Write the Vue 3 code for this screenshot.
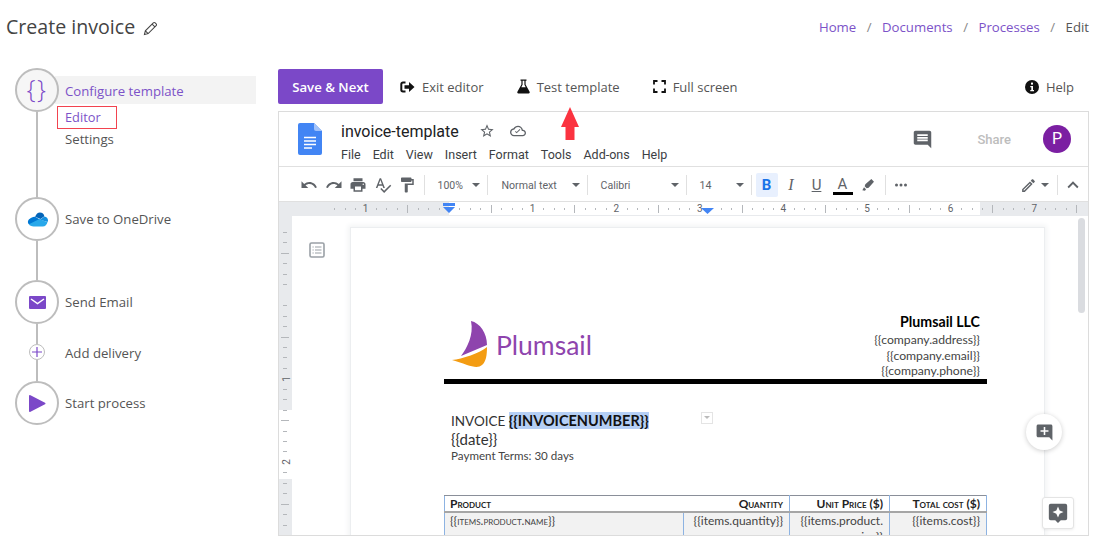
<template>
  <div class="app">
    <header class="top">
      <h1 class="title">
        Create invoice
        <svg class="title-pencil" viewBox="0 0 16 16" width="15" height="15">
          <path d="M1.5 14.5l1-4L11 2a1.4 1.4 0 0 1 2 0l1 1a1.4 1.4 0 0 1 0 2l-8.500 8.500zM2.500 10.500l3 3M9.700 3.300l3 3" fill="none" stroke="#444" stroke-width="1.100" />
        </svg>
      </h1>
      <nav class="crumbs">
        <a>Home</a><i>/</i><a>Documents</a><i>/</i><a>Processes</a><i>/</i><span>Edit</span>
      </nav>
    </header>

    <div class="body">
      <aside class="steps">
        <div class="step">
          <div class="circle circle-active"><span class="braces">{}</span></div>
          <div class="label label-active">Configure template</div>
        </div>
        <div class="link link-a">
          <div class="line"></div>
          <div class="sub">
            <div class="sub-item sub-current">Editor</div>
            <div class="sub-item">Settings</div>
          </div>
        </div>
        <div class="step">
          <div class="circle">
            <svg viewBox="0 0 22 17" width="21" height="15" preserveAspectRatio="none">
              <path d="M8.500 5.500C9.500 2 11.500 0.500 13.500 0.500c2.600 0 4.300 1.800 4.700 4.400l-4 3z" fill="#0364b8" />
              <path d="M2 14C0.500 12.500 0.500 9 3 7.700 4.500 6.500 6.500 5 8.500 5.500l5 3-6 6z" fill="#0078d4" />
              <path d="M18.200 5c2.300.3 3.800 2 3.800 4.300 0 .8-.2 1.400-.5 2l-8-2.500z" fill="#1490df" />
              <path d="M7 16.500c-2.500 0-4.200-1-5-2.500L13 8l8.500 3.500c-.6 2.500-2.500 5-5 5z" fill="#28a8ea" />
            </svg>
          </div>
          <div class="label">Save to OneDrive</div>
        </div>
        <div class="link link-b"><div class="line"></div></div>
        <div class="step">
          <div class="circle">
            <svg viewBox="0 0 17 13" width="17" height="13">
              <rect width="17" height="13" rx="1" fill="#7b48c8" />
              <path d="M2 3l6.500 4.500L15 3" fill="none" stroke="#fff" stroke-width="1.500" />
            </svg>
          </div>
          <div class="label">Send Email</div>
        </div>
        <div class="link link-c"><div class="line"></div></div>
        <div class="step step-mini">
          <div class="rail-cell">
            <div class="mini-circle">
              <svg viewBox="0 0 10 10" width="10" height="10">
                <path d="M5 0v10M0 5h10" stroke="#7b48c8" stroke-width="1.200" />
              </svg>
            </div>
          </div>
          <div class="label">Add delivery</div>
        </div>
        <div class="link link-d"><div class="line"></div></div>
        <div class="step">
          <div class="circle">
            <svg viewBox="0 0 18 19" width="18" height="19">
              <path d="M1 2v15a1 1 0 0 0 1.500.800L17 10.300a1 1 0 0 0 0-1.600L2.500 1.200A1 1 0 0 0 1 2z" fill="#7b48c8" />
            </svg>
          </div>
          <div class="label">Start process</div>
        </div>
      </aside>

      <main class="main">
        <div class="actions">
          <button class="save">Save &amp; Next</button>
          <div class="action action-first">
            <svg viewBox="0 0 15 12" width="15" height="12">
              <path d="M5.500 1.500H3A1.700 1.700 0 0 0 1.300 3.200v5.600A1.700 1.700 0 0 0 3 10.500h2.500" fill="none" stroke="#111" stroke-width="2" />
              <path d="M4.500 4.300H9V1l5.500 5L9 11V7.700H4.500z" fill="#111" />
            </svg>
            Exit editor
          </div>
          <div class="action">
            <svg viewBox="0 0 13 15" width="13" height="15">
              <path d="M3.500.500h6v1.200H8.600v3.800l4 7.300c.4.800-.1 1.700-1 1.700H1.400c-.9 0-1.400-.9-1-1.700l4-7.300V1.700h-.9z" fill="#111" />
              <path d="M5.600 1.700v4.100L4.300 8.200h4.400L7.400 5.800V1.700z" fill="#fff" />
            </svg>
            Test template
          </div>
          <div class="action">
            <svg viewBox="0 0 13 13" width="13" height="13">
              <path d="M1 4.500V1h3.500M8.500 1H12v3.500M12 8.500V12H8.500M4.500 12H1V8.500" fill="none" stroke="#111" stroke-width="1.800" />
            </svg>
            Full screen
          </div>
          <div class="action action-help">
            <svg viewBox="0 0 14 14" width="14" height="14">
              <circle cx="7" cy="7" r="7" fill="#111" />
              <rect x="6" y="2.600" width="2" height="2" fill="#fff" />
              <path d="M5.300 6h2.700v4h1v1.200H5.300V10h1V7.200h-1z" fill="#fff" />
            </svg>
            Help
          </div>
        </div>

        <svg class="arrow" viewBox="0 0 18 33" width="18" height="33">
          <path d="M9 0l9 20h-4.500v13h-9V20H0z" fill="#fb3340" />
        </svg>

        <section class="frame">
          <div class="doc-head">
            <svg class="doc-logo" viewBox="0 0 24 32" width="24" height="32">
              <path d="M2 0h14l8 8v22a2 2 0 0 1-2 2H2a2 2 0 0 1-2-2V2a2 2 0 0 1 2-2z" fill="#4285f4" />
              <path d="M16 0l8 8h-6a2 2 0 0 1-2-2z" fill="#a1c2fa" />
              <path d="M6 14.500h12M6 18h12M6 21.500h12M6 25h8" stroke="#fff" stroke-width="1.600" />
            </svg>
            <div class="doc-info">
              <div class="doc-name">
                <span>invoice-template</span>
                <svg class="doc-star" viewBox="0 0 24 24" width="16" height="16"><path :d="icons.star" fill="#5f6368" /></svg>
                <svg class="doc-cloud" viewBox="0 0 24 24" width="16" height="16">
                  <path :d="icons.cloud" fill="#5f6368" />
                  <path d="M10 15.500L7.500 13l1-1 1.500 1.500 4.500-4.500 1 1z" fill="#5f6368" />
                </svg>
              </div>
              <div class="doc-menu">
                <span v-for="m in menu" :key="m">{{ m }}</span>
              </div>
            </div>
            <svg class="doc-comment" viewBox="0 0 24 24" width="21" height="21"><path :d="icons.comment" fill="#5f6368" /></svg>
            <span class="doc-share">Share</span>
            <div class="avatar">P</div>
          </div>

          <div class="doc-tools">
            <button v-for="t in leftTools" :key="t" class="tool">
              <svg viewBox="0 0 24 24" width="18" height="18"><path :d="icons[t]" fill="#5f6368" /></svg>
            </button>
            <div class="sep sep-first"></div>
            <div class="sel sel-zoom">100%<b class="caret"></b></div>
            <div class="sep"></div>
            <div class="sel sel-style">Normal text<b class="caret"></b></div>
            <div class="sep"></div>
            <div class="sel sel-font">Calibri<b class="caret"></b></div>
            <div class="sep"></div>
            <div class="sel sel-size">14<b class="caret"></b></div>
            <div class="sep"></div>
            <button class="fmt fmt-bold">B</button>
            <button class="fmt fmt-italic">I</button>
            <button class="fmt fmt-under">U</button>
            <button class="fmt fmt-color">A</button>
            <button class="fmt">
              <svg viewBox="0 0 24 24" width="16" height="16">
                <path d="M21 7l-4-4-9 8-1 3 3 3 3-1zM6 15.500L3.500 20l4 .5 1.500-2z" fill="#5f6368" />
              </svg>
            </button>
            <div class="sep sep-more"></div>
            <button class="tool">
              <svg viewBox="0 0 24 24" width="18" height="18">
                <circle cx="6" cy="12" r="2" fill="#5f6368" /><circle cx="12" cy="12" r="2" fill="#5f6368" /><circle cx="18" cy="12" r="2" fill="#5f6368" />
              </svg>
            </button>
            <div class="tools-right">
              <svg viewBox="0 0 24 24" width="17" height="17"><path :d="icons.edit" fill="#5f6368" /></svg>
              <b class="caret caret-edit"></b>
              <div class="sep sep-edit"></div>
              <svg viewBox="0 0 24 24" width="22" height="22"><path :d="icons.less" fill="#5f6368" /></svg>
            </div>
          </div>

          <svg class="ruler" width="809" height="13">
            <rect width="809" height="13" fill="#e8eaed" />
            <rect x="170" width="531" height="13" fill="#fff" />
            <path v-for="t in rulerTicks" :key="t.x" :d="`M${t.x} ${t.y1}V${t.y2}`" stroke="#b4b7bb" stroke-width="1" />
            <text v-for="n in rulerNums" :key="n.x" :x="n.x" y="10" class="ruler-num" text-anchor="middle">{{ n.label }}</text>
            <path d="M164 1h12v3h-12zM164 5h12l-6 6z" fill="#4285f4" />
            <path d="M422 6h13l-6.500 6z" fill="#4285f4" />
          </svg>

          <div class="doc-area">
            <svg class="vruler" width="13" height="320">
              <rect width="13" height="320" fill="#e8eaed" />
              <rect y="194" width="13" height="69" fill="#fff" />
              <path v-for="t in vTicks" :key="t.y" :d="`M${t.x1} ${t.y}H${t.x2}`" stroke="#b4b7bb" stroke-width="1" />
              <text x="6.500" y="167" class="ruler-num" text-anchor="middle" transform="rotate(-90 6.500 163)">1</text>
              <text x="6.500" y="250" class="ruler-num" text-anchor="middle" transform="rotate(-90 6.500 246)">2</text>
            </svg>
            <div class="outline">
              <svg viewBox="0 0 16 16" width="16" height="16">
                <rect x="1" y="1" width="14" height="14" rx="1.500" fill="none" stroke="#9aa0a6" stroke-width="1.600" />
                <path d="M6 5h6.500M6 8h6.500M6 11h6.500" stroke="#9aa0a6" stroke-width="1.200" />
                <path d="M3.500 5h1.200M3.500 8h1.200M3.500 11h1.200" stroke="#9aa0a6" stroke-width="1.200" />
              </svg>
            </div>
            <article class="page">
              <div class="letterhead">
                <div class="brand">
                  <svg viewBox="0 0 40 48" width="40" height="48">
                    <path d="M21 1C30 3 37 13 37 25L11 36C17 28 24 15 21 1Z" fill="#8e44ad" />
                    <path d="M37 27C37 35 36 42 32 45 29 48 23 47 17 45 12 43 6 41 2 40 12 39 30 33 37 27Z" fill="#f39c12" />
                  </svg>
                  <span class="brand-name">Plumsail</span>
                </div>
                <div class="company">
                  <div class="company-name">Plumsail LLC</div>
                  <div>{{ tag("company.address") }}</div>
                  <div>{{ tag("company.email") }}</div>
                  <div>{{ tag("company.phone") }}</div>
                </div>
              </div>
              <div class="rule"></div>
              <div class="invoice-line">
                INVOICE <mark class="hl">{{ tag("INVOICENUMBER") }}</mark>
                <span class="suggest"><b></b></span>
              </div>
              <div class="date">{{ tag("date") }}</div>
              <div class="terms">Payment Terms: 30 days</div>
              <table class="items">
                <colgroup>
                  <col class="c1" /><col class="c2" /><col class="c3" /><col class="c4" />
                </colgroup>
                <thead>
                  <tr>
                    <th class="th-product">Product</th>
                    <th class="right">Quantity</th>
                    <th class="right">Unit Price ($)</th>
                    <th class="right">Total cost ($)</th>
                  </tr>
                </thead>
                <tbody>
                  <tr>
                    <td class="caps">{{ tag("items.product.name") }}</td>
                    <td class="right">{{ tag("items.quantity") }}</td>
                    <td class="right">&#123;&#123;items.product.<br />price}}</td>
                    <td class="right">{{ tag("items.cost") }}</td>
                  </tr>
                </tbody>
              </table>
            </article>
            <div class="scroll-thumb"></div>
            <button class="float-add">
              <svg viewBox="0 0 24 24" width="19" height="19"><path :d="icons.addComment" fill="#5f6368" /></svg>
            </button>
            <button class="float-explore">
              <svg viewBox="0 0 24 24" width="22" height="22">
                <path d="M4 2h16a2 2 0 0 1 2 2v14a2 2 0 0 1-2 2h-5l-3 3-3-3H4a2 2 0 0 1-2-2V4a2 2 0 0 1 2-2z" fill="#5f6368" />
                <path d="M12 5l1.800 4.200L18 11l-4.200 1.800L12 17l-1.800-4.200L6 11l4.200-1.800z" fill="#fff" />
              </svg>
            </button>
          </div>
        </section>
      </main>
    </div>
  </div>
</template>

<script setup>
const menu = ["File", "Edit", "View", "Insert", "Format", "Tools", "Add-ons", "Help"];
const leftTools = ["undo", "redo", "print", "spell", "paint"];

const icons = {
  undo: "M12.5 8c-2.65 0-5.05.99-6.9 2.6L2 7v9h9l-3.62-3.62c1.39-1.16 3.16-1.88 5.12-1.88 3.54 0 6.55 2.31 7.6 5.5l2.37-.78C21.08 11.03 17.15 8 12.5 8z",
  redo: "M18.4 10.6C16.55 8.99 14.15 8 11.5 8c-4.65 0-8.58 3.03-9.96 7.22L3.9 16c1.05-3.19 4.05-5.5 7.6-5.5 1.95 0 3.73.72 5.12 1.88L13 16h9V7l-3.6 3.6z",
  print: "M19 8H5c-1.66 0-3 1.34-3 3v6h4v4h12v-4h4v-6c0-1.66-1.34-3-3-3zm-3 11H8v-5h8v5zm3-7c-.55 0-1-.45-1-1s.45-1 1-1 1 .45 1 1-.45 1-1 1zm-1-9H6v4h12V3z",
  spell: "M12.45 16h2.09L9.43 3H7.57L2.46 16h2.09l1.12-3h5.64l1.14 3zm-6.02-5L8.5 5.48 10.57 11H6.43zm15.16.59l-8.09 8.09L9.83 16l-1.41 1.41 5.09 5.09L23 13l-1.41-1.41z",
  paint: "M18 4V3c0-.55-.45-1-1-1H5c-.55 0-1 .45-1 1v4c0 .55.45 1 1 1h12c.55 0 1-.45 1-1V6h1v4H9v11c0 .55.45 1 1 1h2c.55 0 1-.45 1-1v-9h8V4h-3z",
  star: "M22 9.24l-7.19-.62L12 2 9.19 8.63 2 9.24l5.46 4.73L5.82 21 12 17.27 18.18 21l-1.63-7.03L22 9.24zM12 15.4l-3.76 2.27 1-4.28-3.32-2.88 4.38-.38L12 6.1l1.71 4.04 4.38.38-3.32 2.88 1 4.28L12 15.4z",
  cloud: "M19.35 10.04C18.67 6.59 15.64 4 12 4 9.11 4 6.6 5.64 5.35 8.04 2.34 8.36 0 10.91 0 14c0 3.31 2.69 6 6 6h13c2.76 0 5-2.24 5-5 0-2.64-2.05-4.78-4.65-4.96zM19 18H6c-2.21 0-4-1.79-4-4 0-2.05 1.53-3.76 3.56-3.97l1.07-.11.5-.95C8.08 7.14 9.94 6 12 6c2.62 0 4.88 1.86 5.39 4.43l.3 1.5 1.53.11c1.56.1 2.78 1.41 2.78 2.96 0 1.65-1.35 3-3 3z",
  comment: "M21.99 4c0-1.1-.89-2-1.99-2H4c-1.1 0-2 .9-2 2v12c0 1.1.9 2 2 2h14l4 4-.01-18zM18 14H6v-2h12v2zm0-3H6V9h12v2zm0-3H6V6h12v2z",
  addComment: "M22 4c0-1.1-.9-2-2-2H4c-1.1 0-2 .9-2 2v12c0 1.1.9 2 2 2h14l4 4V4zm-5 7h-4v4h-2v-4H7V9h4V5h2v4h4v2z",
  edit: "M3 17.25V21h3.75L17.81 9.94l-3.75-3.75L3 17.25zM5.92 19H5v-.92l9.06-9.06.92.92L5.92 19zM20.71 7.04c.39-.39.39-1.02 0-1.41l-2.34-2.34c-.2-.2-.45-.29-.71-.29s-.51.1-.7.29l-1.83 1.83 3.75 3.75 1.83-1.83z",
  less: "M12 8l-6 6 1.41 1.41L12 10.83l4.59 4.58L18 14z",
};

const tag = (name) => "{{" + name + "}}";

// ruler origin sits under the indent marker, one inch is 83.6px
const INCH = 83.6;
const ORIGIN = 170;

const rulerTicks = [];
for (let i = -11; i <= 60; i++) {
  if (i % 8 === 0) continue;
  const x = Math.round(ORIGIN + (i * INCH) / 8) + 0.5;
  if (x > 809) continue;
  const half = i % 4 === 0;
  rulerTicks.push({ x, y1: half ? 3 : 6, y2: half ? 11 : 8 });
}

const rulerNums = [{ x: 86.5, label: "1" }];
for (let n = 1; n <= 7; n++) {
  rulerNums.push({ x: ORIGIN + n * INCH, label: String(n) });
}

// vertical ruler: long mark every inch between the numbers, numbers replace i % 8 === 6
const vTicks = [];
for (let i = 0; i < 30; i++) {
  if (i % 8 === 6) continue;
  const y = Math.round(16 + i * 10.45) + 0.5;
  const long = i % 8 === 2;
  vTicks.push({ y, x1: long ? 2 : 4, x2: long ? 10 : 8 });
}
</script>

<style>
html,
body {
  margin: 0;
  background: #fff;
}
</style>

<style scoped>
.app {
  width: 1100px;
  height: 553px;
  overflow: hidden;
  font-family: "Open Sans", "Liberation Sans", sans-serif;
  color: #555;
  font-size: 13.200px;
}

.top {
  height: 68px;
  display: flex;
  justify-content: space-between;
  align-items: flex-start;
  padding: 12px 11px 0 6px;
  box-sizing: border-box;
}

.title {
  margin: 0;
  font-size: 19.600px;
  line-height: 30px;
  font-weight: 400;
  color: #444;
  display: flex;
  align-items: center;
}

.title-pencil {
  margin: 3px 0 0 8px;
}

.crumbs {
  display: flex;
  font-size: 13.200px;
  line-height: 30px;
}

.crumbs a {
  color: #7c52c8;
}

.crumbs i {
  font-style: normal;
  color: #888;
  margin: 0 10.500px;
}

.body {
  display: flex;
}

.steps {
  width: 278px;
  flex: none;
  padding-left: 15px;
  box-sizing: border-box;
}

.step {
  display: flex;
  align-items: center;
  height: 44px;
}

.step-mini {
  height: 16px;
}

.step-mini .label {
  padding-top: 2px;
}

.circle {
  width: 44px;
  height: 44px;
  flex: none;
  box-sizing: border-box;
  border: 2px solid #bdbdbd;
  border-radius: 50%;
  background: #fff;
  display: flex;
  align-items: center;
  justify-content: center;
  position: relative;
  z-index: 1;
}

.circle-active {
  background: #f6f6f6;
}

.braces {
  color: #7b48c8;
  font-size: 25px;
  font-weight: 300;
  line-height: 1;
  margin-top: -4px;
  letter-spacing: 1.500px;
}

.rail-cell {
  width: 44px;
  flex: none;
  display: flex;
  justify-content: center;
}

.mini-circle {
  width: 16px;
  height: 16px;
  box-sizing: border-box;
  border: 1.500px solid #bdbdbd;
  border-radius: 50%;
  display: flex;
  align-items: center;
  justify-content: center;
}

.label {
  padding-left: 6px;
  white-space: nowrap;
}

.label-active {
  background: #f3f3f3;
  color: #7c52c8;
  width: 201px;
  height: 28px;
  margin-left: -4px;
  padding-left: 10px;
  line-height: 30px;
  box-sizing: border-box;
}

.link {
  display: flex;
}

.line {
  width: 2px;
  margin-left: 21px;
  background: #bdbdbd;
  flex: none;
}

.link-a {
  height: 85px;
}

.link-b {
  height: 39px;
}

.link-c {
  height: 20px;
}

.link-d {
  height: 21px;
}

.sub {
  margin: -6px 0 0 19px;
}

.sub-item {
  padding-left: 8px;
  line-height: 21px;
  height: 23px;
}

.sub-current {
  width: 60px;
  height: 23px;
  box-sizing: border-box;
  border: 1.500px solid #f2434f;
  color: #7c52c8;
  padding-left: 7px;
  font-size: 12.800px;
}

.main {
  width: 811px;
  margin-top: 1px;
  position: relative;
  font-size: 13px;
}

.actions {
  height: 35px;
  display: flex;
  align-items: center;
  margin-bottom: 7px;
}

.save {
  width: 105px;
  height: 35px;
  background: #7b48c8;
  color: #fff;
  border: 0;
  border-radius: 2px;
  font: 600 13.200px "Open Sans", sans-serif;
}

.action {
  display: flex;
  align-items: center;
  gap: 7px;
  margin-left: 33px;
  white-space: nowrap;
}

.action-first {
  margin-left: 17px;
}

.action-help {
  margin-left: auto;
  padding-right: 15px;
}

.arrow {
  position: absolute;
  left: 283px;
  top: 38px;
}

.frame {
  height: 425px;
  box-sizing: border-box;
  border: 1px solid #dcdcdc;
  display: flex;
  flex-direction: column;
  overflow: hidden;
}

.doc-head {
  height: 55px;
  flex: none;
  display: flex;
  align-items: center;
  border-bottom: 1px solid #e0e0e0;
  font-family: Roboto, sans-serif;
  padding-left: 19px;
  box-sizing: border-box;
}

.doc-logo {
  flex: none;
}

.doc-info {
  margin-left: 19px;
  padding-top: 4px;
}

.doc-name {
  display: flex;
  align-items: center;
  font-size: 16px;
  color: #202124;
  height: 22px;
}

.doc-star {
  margin-left: 20px;
}

.doc-cloud {
  margin-left: 15px;
}

.doc-menu {
  display: flex;
  gap: 12px;
  font-size: 12.500px;
  color: #3c4043;
  margin-top: 5px;
}

.doc-comment {
  margin-left: auto;
  position: relative;
  left: 1px;
}

.doc-share {
  margin-left: 45px;
  color: #bdbdbd;
  font-size: 13px;
  font-weight: 500;
}

.avatar {
  width: 28px;
  height: 28px;
  border-radius: 50%;
  background: #7b1fa2;
  color: #fff;
  font-size: 16px;
  line-height: 28px;
  text-align: center;
  margin: 0 17px 0 32px;
}

.doc-tools {
  height: 35px;
  flex: none;
  display: flex;
  align-items: center;
  box-sizing: border-box;
  border-bottom: 1px solid #e0e0e0;
  padding: 2px 0 0 18px;
  font-family: Roboto, sans-serif;
  font-size: 10.600px;
  color: #5f6368;
}

.tool {
  width: 24.500px;
  height: 24px;
  padding: 0;
  border: 0;
  background: none;
  display: flex;
  align-items: center;
  justify-content: center;
  flex: none;
}

.sep {
  width: 1px;
  height: 20px;
  background: #e0e0e0;
  flex: none;
}

.sep-first {
  margin: 0 0 0 4px;
}

.sep-more {
  margin: 0 3px 0 5px;
}

.sel {
  display: flex;
  align-items: center;
  padding: 0 7px 0 13px;
  box-sizing: border-box;
  flex: none;
}

.sel-zoom {
  width: 62px;
  font-size: 10.500px;
}

.sel-style {
  width: 99px;
  padding-left: 14px;
}

.sel-font {
  width: 98px;
}

.sel-size {
  width: 64px;
}

.caret {
  margin-left: auto;
  width: 0;
  height: 0;
  border-left: 4px solid transparent;
  border-right: 4px solid transparent;
  border-top: 4px solid #5f6368;
}

.fmt {
  width: 24px;
  height: 24px;
  padding: 0;
  border: 0;
  background: none;
  flex: none;
  margin-left: 1.500px;
  display: flex;
  align-items: center;
  justify-content: center;
  font: 400 15px Roboto, sans-serif;
  color: #5f6368;
}

.fmt-bold {
  width: 22px;
  margin-left: 4px;
  background: #e8f0fe;
  border-radius: 2px;
  color: #1a73e8;
  font-weight: 700;
}

.fmt-italic {
  font-style: italic;
  font-family: "Liberation Serif", serif;
  font-size: 16px;
}

.fmt-under {
  text-decoration: underline;
}

.fmt-color {
  border-bottom: 3px solid #000;
  height: 20px;
  width: 20px;
  margin: 0 2px 0 4px;
  line-height: 16px;
}

.tools-right {
  margin-left: auto;
  padding-right: 4px;
  display: flex;
  align-items: center;
}

.caret-edit {
  margin: 0 8px 0 4px;
}

.sep-edit {
  margin-right: 4px;
}

.ruler {
  display: block;
  flex: none;
}

.ruler-num {
  font: 10px Roboto, sans-serif;
  fill: #5f6368;
}

.doc-area {
  flex: 1;
  display: flex;
  position: relative;
  overflow: hidden;
  border-top: 1px solid #e8eaed;
}

.vruler {
  flex: none;
  display: block;
}

.outline {
  width: 59px;
  flex: none;
  box-sizing: border-box;
  padding: 26px 0 0 17px;
}

.page {
  width: 693px;
  height: 400px;
  margin-top: 12px;
  flex: none;
  box-sizing: border-box;
  padding: 84px 57px 0 93px;
  background: #fff;
  box-shadow: 0 0 0 1px #eceef0, 0 0 5px 3px #f3f4f5;
  font-family: Lato, "Open Sans", sans-serif;
  color: #444;
}

.letterhead {
  height: 67px;
  display: flex;
  justify-content: space-between;
}

.brand {
  display: flex;
  align-items: flex-start;
  margin-left: 6px;
  margin-top: 8px;
}

.brand-name {
  margin: 10px 0 0 6px;
  font-size: 26.500px;
  line-height: 30px;
  color: #8e44ad;
}

.company {
  text-align: right;
  font-size: 12.200px;
  line-height: 15.500px;
  padding-right: 7px;
}

.company-name {
  font-size: 14.200px;
  font-weight: 700;
  line-height: 20px;
  color: #000;
}

.rule {
  height: 5px;
  background: #000;
}

.invoice-line {
  margin: 27px 0 0 7px;
  font-size: 13.500px;
  line-height: 20px;
  color: #333;
  position: relative;
}

.hl {
  background: #b5cff5;
  color: #111;
  font-size: 14.500px;
  font-weight: 700;
}

.suggest {
  position: absolute;
  left: 250px;
  top: 1px;
  width: 10px;
  height: 10px;
  border: 1px solid #e4e4e4;
}

.suggest b {
  position: absolute;
  left: 2px;
  top: 3px;
  border-left: 3px solid transparent;
  border-right: 3px solid transparent;
  border-top: 3px solid #bbb;
}

.date {
  margin-left: 7px;
  font-size: 15px;
  line-height: 17px;
  color: #333;
}

.terms {
  margin-left: 7px;
  font-size: 11.600px;
  line-height: 16px;
}

.items {
  margin-top: 31px;
  width: 543px;
  table-layout: fixed;
  border-collapse: collapse;
  font-size: 12px;
  color: #444;
}

.c1 {
  width: 239px;
}

.c2 {
  width: 106px;
}

.c3 {
  width: 100px;
}

.items th {
  font-variant: small-caps;
  font-weight: 700;
  text-align: left;
  padding: 0 6px;
  height: 15px;
  line-height: 14px;
  color: #222;
  border-top: 1px solid #8a8f99;
  border-bottom: 2px solid #a6a6a6;
  border-left: 1px solid #8db3e2;
  border-right: 1px solid #8db3e2;
}

.items .th-product {
  border-right: 0;
  padding-left: 5px;
}

.items th:nth-child(2) {
  border-left: 0;
}

.items td {
  background: #f2f2f2;
  vertical-align: top;
  padding: 0 6px 0 5px;
  line-height: 16px;
  height: 40px;
  border-left: 1px solid #8db3e2;
  border-right: 1px solid #8db3e2;
}

.items td:nth-child(2) {
  border-left: 1px solid #a6a6a6;
}

.items .right {
  text-align: right;
}

.items .caps {
  font-variant: small-caps;
}

.scroll-thumb {
  position: absolute;
  left: 799px;
  top: 2px;
  width: 7px;
  height: 95px;
  background: #dadce0;
  border-radius: 4px;
}

.float-add {
  position: absolute;
  left: 747px;
  top: 198px;
  width: 36px;
  height: 36px;
  border-radius: 50%;
  border: 0;
  padding: 0;
  background: #fff;
  box-shadow: 0 1px 5px rgba(0, 0, 0, 0.2);
  display: flex;
  align-items: center;
  justify-content: center;
}

.float-explore {
  position: absolute;
  left: 763px;
  top: 281px;
  width: 32px;
  height: 32px;
  box-sizing: border-box;
  border: 1px solid #e4e4e4;
  border-radius: 3px;
  padding: 0;
  background: #fff;
  box-shadow: 0 1px 3px rgba(0, 0, 0, 0.08);
  display: flex;
  align-items: center;
  justify-content: center;
}
</style>
